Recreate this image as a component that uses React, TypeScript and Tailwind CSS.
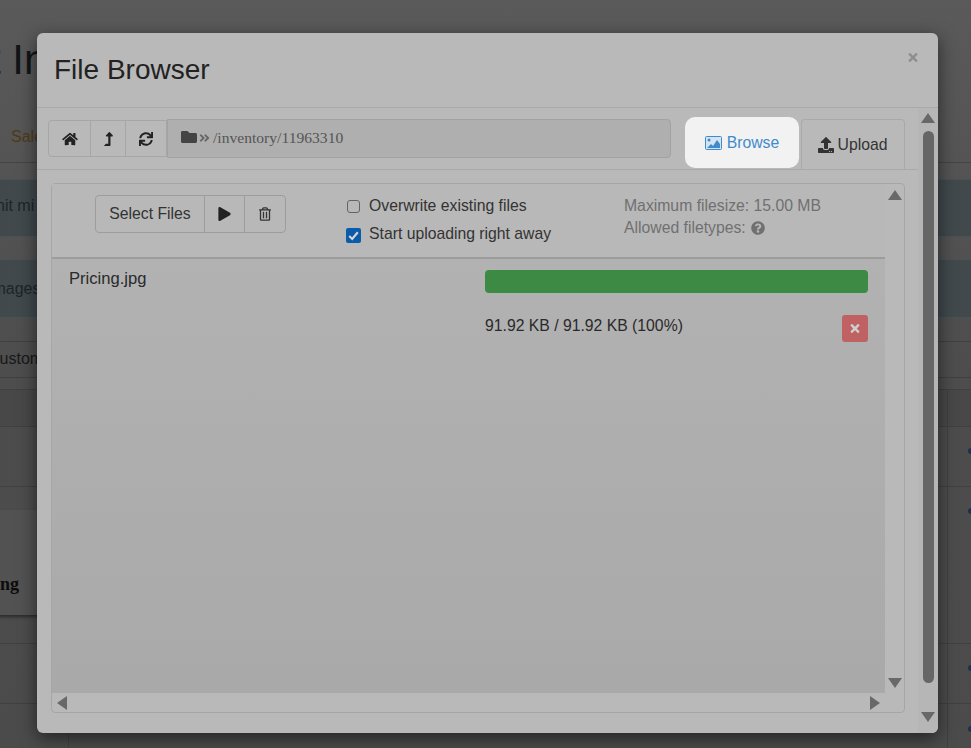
import React from 'react';
import {
  FaAngleDoubleRight,
  FaFolder,
  FaHome,
  FaLevelUpAlt,
  FaPlay,
  FaQuestionCircle,
  FaRegTrashAlt,
  FaSync,
  FaTimes,
  FaUpload,
} from 'react-icons/fa';

// Little triangle ends of the scrollbars
const Arrow = ({ dir, className = '' }: { dir: 'up' | 'down' | 'left' | 'right'; className?: string }) => {
  const points = {
    up: '0,11 7,1 14,11',
    down: '0,1 14,1 7,11',
    left: '11,0 11,14 1,7',
    right: '1,0 1,14 11,7',
  }[dir];
  const vertical = dir === 'up' || dir === 'down';
  return (
    <svg viewBox={vertical ? '0 0 14 12' : '0 0 12 14'} className={`${vertical ? 'w-[14px] h-[12px]' : 'w-[12px] h-[14px]'} fill-[#686868] ${className}`}>
      <polygon points={points} />
    </svg>
  );
};

// The page behind the dialog, mostly covered
const Background = () => (
  <div className="relative h-[748px] overflow-hidden bg-gradient-to-b from-[#5a5a5a] via-[#4d4d4d] to-[#4b4b4b]">
    <div className="h-[163px] border-b border-[#444]">
      <div className="pt-[33px] ml-[-11px] text-[42px] leading-[54px] text-[#111517]">t In</div>
      <div className="mt-[38px] ml-[11px] text-[16px] leading-[24px] text-[#4f3a18]">Sales</div>
    </div>
    <div className="mt-[16px] h-[58px] bg-[#41494d] border-y border-[#495257]">
      <div className="ml-[-4px] pt-[14px] text-[16px] leading-[24px] text-[#1c2529]">nit mi</div>
    </div>
    <div className="mt-[22px] h-[59px] bg-[#41494d] border-y border-[#495257]">
      <div className="ml-[-12px] pt-[17px] text-[16px] leading-[24px] text-[#1c2529]">Images</div>
    </div>
    <div className="mt-[23px] h-[37px] border-y border-[#404040]">
      <div className="ml-[-12px] pt-[5px] text-[16px] leading-[24px] text-[#181818]">Custom</div>
    </div>
    <div className="mt-[11px] h-[38px] border-y border-[#404040] bg-[#484848]" />
    <div className="h-[60px] border-b border-[#404040] bg-[#4c4c4c]" />
    <div className="mt-[23px] ml-[-10px] h-[105px] w-[60px] bg-[#525252] shadow-[0_2px_3px_#2a2a2a] flex items-end pl-[10px] pb-[17px]">
      <span className="font-['Liberation_Serif',serif] font-bold text-[18px] text-[#0c0c0c]">ng</span>
    </div>
    <div className="mt-[28px] h-[61px] border-y border-[#404040]" />
    <div className="absolute top-[390px] bottom-0 left-[947px] w-px bg-[#404040]" />
    <div className="absolute top-[390px] bottom-0 left-[68px] w-px bg-[#404040]" />
    {[448, 508, 665, 726].map((y) => (
      <div key={y} className="absolute left-[968px] w-[6px] h-[6px] rounded-full bg-[#212f4e]" style={{ top: y }} />
    ))}
  </div>
);

const App = () => {
  return (
    <div className="relative w-[971px] h-[748px] overflow-hidden font-['Liberation_Sans',Arial,sans-serif] text-[15.75px] text-[#222]">
      <Background />

      {/* dialog */}
      <div className="absolute left-[37px] top-[33px] w-[901px] h-[700px] flex flex-col rounded-[6px] bg-[#b9b9b9] shadow-[0_5px_18px_rgba(0,0,0,0.55)]">
        <div className="h-[75px] shrink-0 flex items-start justify-between border-b border-[#a9a9a9] pl-[17px] pr-[18px]">
          <h4 className="pt-[17px] text-[28px] leading-[40px] text-[#222]">File Browser</h4>
          <FaTimes className="mt-[18px] mr-px w-[12px] h-[13px] text-[#8e8e8e]" />
        </div>

        <div className="flex-1 flex min-h-0">
          <div className="w-[881px] shrink-0">
            {/* toolbar and tabs */}
            <div className="relative h-[62px] pt-[11px] pl-[11px] flex border-b border-[#a9a9a9]">
              <div className="flex h-[37px] mt-px rounded-l-[4px] border border-[#a6a6a6] text-[#222]">
                <div className="w-[42px] flex items-center justify-center border-r border-[#a6a6a6]">
                  <FaHome className="w-[16px] h-[14px]" />
                </div>
                <div className="w-[35px] flex items-center justify-center border-r border-[#a6a6a6]">
                  <FaLevelUpAlt className="w-[13px] h-[14px]" />
                </div>
                <div className="w-[40px] flex items-center justify-center">
                  <FaSync className="w-[14px] h-[14px]" />
                </div>
              </div>
              <div className="w-[504px] h-[39px] flex items-center pl-[13px] pb-[2px] rounded-r-[4px] border border-[#a2a2a2] bg-[#afafaf] font-['Liberation_Serif',serif] text-[#555]">
                <FaFolder className="w-[16px] h-[16px] text-[#444] mb-[2px]" />
                <FaAngleDoubleRight className="w-[11px] h-[12px] ml-[2px] text-[#666]" />
                <span className="ml-[3px] text-[15.6px]">/inventory/11963310</span>
              </div>
              <div className="ml-[14px] mt-[-2px] w-[114px] h-[51px] z-10 flex items-center justify-center gap-[5px] rounded-[10px] bg-[#f2f2f2] text-[#428bca]">
                <svg viewBox="0 0 17 14" className="w-[17px] h-[14px]">
                  <rect x="0.5" y="0.5" width="16" height="13" rx="1" fill="#d3e4f3" stroke="#428bca" />
                  <circle cx="4" cy="4" r="1.5" fill="#428bca" />
                  <path d="M2 12 L6 8 L8 10 L12 4 L15 8 L15 12 Z" fill="#428bca" />
                </svg>
                Browse
              </div>
              <div className="ml-[2px] pr-px w-[104px] h-[50px] flex items-center justify-center gap-[4px] rounded-t-[4px] border border-b-0 border-[#a9a9a9] text-[#333]">
                <FaUpload className="w-[16px] h-[16px]" />
                Upload
              </div>
            </div>

            {/* upload panel */}
            <div className="mt-[13px] ml-[14px] w-[854px] h-[530px] flex flex-col rounded-[4px] border border-[#a6a6a6] bg-[#b9b9b9]">
              <div className="flex-1 flex min-h-0">
                <div className="flex-1 flex flex-col min-w-0">
                  <div className="h-[75px] shrink-0 flex pl-[43px] pt-[11px] border-b-2 border-[#9c9c9c] bg-[#b8b8b8]">
                    <div className="flex h-[38px] rounded-[4px] border border-[#9d9d9d]">
                      <div className="w-[109px] flex items-center justify-center border-r border-[#9d9d9d] text-[#333]">Select Files</div>
                      <div className="w-[40px] flex items-center justify-center border-r border-[#9d9d9d]">
                        <FaPlay className="w-[13px] h-[14px] text-[#222]" />
                      </div>
                      <div className="w-[40px] flex items-center justify-center">
                        <FaRegTrashAlt className="w-[12px] h-[14px] text-[#333]" />
                      </div>
                    </div>
                    <div className="ml-[60px] w-[278px] flex flex-col gap-[10px] mt-[2px] text-[#333]">
                      <label className="flex items-center h-[18px]">
                        <span className="w-[13px] h-[13px] ml-px mt-px rounded-[3px] border border-[#636363]" />
                        <span className="ml-[9px]">Overwrite existing files</span>
                      </label>
                      <label className="flex items-center h-[18px]">
                        <span className="w-[15px] h-[15px] mt-[3px] flex items-center justify-center rounded-[2px] bg-[#0a5cab]">
                          <svg viewBox="0 0 14 14" className="w-[15px] h-[15px]">
                            <path d="M3 7.5 L5.8 10.2 L11 4" fill="none" stroke="#d5d5d5" strokeWidth="2" />
                          </svg>
                        </span>
                        <span className="ml-[8px]">Start uploading right away</span>
                      </label>
                    </div>
                    <div className="leading-[22px] text-[#707070]">
                      <div>Maximum filesize: 15.00 MB</div>
                      <div className="flex items-center gap-[5px]">
                        Allowed filetypes:
                        <FaQuestionCircle className="w-[14px] h-[14px]" />
                      </div>
                    </div>
                  </div>

                  {/* file list */}
                  <div className="flex-1 flex bg-gradient-to-b from-[#b2b2b2] to-[#a9a9a9] pl-[17px] pr-[17px]">
                    <div className="w-[416px] pt-[8px] leading-[24px] text-[16.6px] text-[#2a2a2a]">Pricing.jpg</div>
                    <div className="flex-1 pt-[11px]">
                      <div className="h-[23px] rounded-[4px] bg-[#3c8a44]" />
                      <div className="mt-[22px] flex items-start justify-between">
                        <span className="mt-[-1px] leading-[24px] text-[#2a2a2a]">91.92 KB / 91.92 KB (100%)</span>
                        <div className="w-[26px] h-[27px] flex items-center justify-center rounded-[3px] bg-[#c06163]">
                          <FaTimes className="w-[12px] h-[13px] text-[#cfcfcf]" />
                        </div>
                      </div>
                    </div>
                  </div>
                </div>
                <div className="w-[19px] shrink-0 flex flex-col items-center justify-between pt-[5px] pb-[4px]">
                  <Arrow dir="up" />
                  <Arrow dir="down" />
                </div>
              </div>
              <div className="h-[19px] shrink-0 flex items-center justify-between pl-[4px] pr-[23px]">
                <Arrow dir="left" />
                <Arrow dir="right" />
              </div>
            </div>
          </div>

          {/* dialog scrollbar */}
          <div className="w-[20px] flex flex-col items-center pt-[4px] pb-[10px] bg-[#b6b6b6] rounded-br-[6px]">
            <Arrow dir="up" />
            <div className="mt-[7px] w-[11px] h-[552px] rounded-[6px] bg-[#666]" />
            <Arrow dir="down" className="mt-[28px]" />
          </div>
        </div>
      </div>
    </div>
  );
};

export default App;
